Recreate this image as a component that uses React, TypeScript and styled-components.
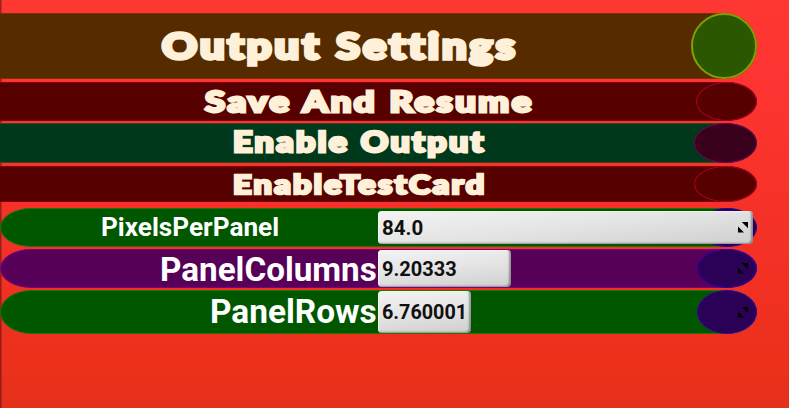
import React, { useLayoutEffect, useRef, useState } from "react";
import styled, { createGlobalStyle } from "styled-components";

const GlobalStyle = createGlobalStyle`
  * { box-sizing: border-box; }
  body { margin: 0; overflow: hidden; background: #f03020; }
`;

const Panel = styled.main`
  width: 789px;
  height: 408px;
  padding-top: 13px;
  display: flex;
  flex-direction: column;
  align-items: flex-start;
  overflow: hidden;
  background:
    linear-gradient(90deg, rgba(80, 15, 15, 0.65), rgba(80, 15, 15, 0.45) 1px, transparent 2.5px),
    linear-gradient(180deg, #ff3733 0%, #fd3431 22%, #f63228 50%, #f03021 75%, #ec301b 90%, #e4301b 100%);
`;

const Bar = styled.div<{ $h: number; $gap: number; $fill: string; $edge: string; $round?: boolean; $knob: number }>`
  flex: none;
  display: flex;
  align-items: center;
  width: 757px;
  height: ${p => p.$h}px;
  margin-bottom: ${p => p.$gap}px;
  background: ${p => p.$fill};
  border: 1px solid ${p => p.$edge};
  ${p => !p.$round && "border-left: 0;"}
  border-radius: ${p => {
    const rx = p.$knob / 2;
    const left = p.$round ? 31 : 0;
    return `${left}px ${rx}px ${rx}px ${left}px / 50%`;
  }};
`;

const Knob = styled.span<{ $w: number; $fill: string; $edge: string; $line?: number }>`
  flex: none;
  display: flex;
  align-items: center;
  justify-content: flex-end;
  width: ${p => p.$w}px;
  height: calc(100% + 2px);
  margin: -1px -1px -1px auto;
  padding-right: 8px;
  border-radius: 50%;
  border: ${p => p.$line ?? 1}px solid ${p => p.$edge};
  background: ${p => p.$fill};
`;

const TextSlot = styled.span<{ $x: number; $w: number; $dy: number }>`
  flex: none;
  width: ${p => p.$w}px;
  margin-left: ${p => p.$x}px;
  padding-top: ${p => Math.max(0, p.$dy) * 2}px;
  padding-bottom: ${p => Math.max(0, -p.$dy) * 2}px;
  line-height: 1;
`;

const Glyphs = styled.span<{ $size: number; $kind: Kind }>`
  display: inline-block;
  vertical-align: top;
  white-space: nowrap;
  transform-origin: left center;
  font-size: ${p => p.$size}px;
  line-height: 1;
  ${p => p.$kind === "display" && `
    font-family: Lato, sans-serif;
    font-weight: 900;
    color: #fff1d9;
    -webkit-text-stroke: ${p.$size * 0.1}px #fff1d9;
    letter-spacing: 0.07em;
    word-spacing: 0.03em;
    margin-left: 0.03em;
    margin-right: -0.05em;
  `}
  ${p => p.$kind === "label" && `
    font-family: Roboto, sans-serif;
    font-weight: 700;
    color: #fff;
  `}
  ${p => p.$kind === "value" && `
    font-family: Roboto, sans-serif;
    font-weight: 700;
    color: #101010;
  `}
`;

type Kind = "display" | "label" | "value";
interface TextProps { children: string; kind: Kind; size: number; x: number; w: number; dy?: number }

function FitText({ children, kind, size, x, w, dy = 0 }: TextProps) {
  const ref = useRef<HTMLSpanElement>(null);
  const [scale, setScale] = useState(1);
  useLayoutEffect(() => {
    if (ref.current) setScale(w / ref.current.offsetWidth);
  }, [children, w, size]);
  return (
    <TextSlot $x={x} $w={w} $dy={dy}>
      <Glyphs ref={ref} $size={size} $kind={kind} style={{ transform: `scaleX(${scale})` }}>
        {children}
      </Glyphs>
    </TextSlot>
  );
}

const Field = styled.div<{ $w: number; $h: number }>`
  position: relative;
  z-index: 1;
  flex: none;
  display: flex;
  align-items: center;
  width: ${p => p.$w}px;
  height: ${p => p.$h}px;
  border-radius: 4px;
  background: linear-gradient(174deg, #f3f3f3, #e4e4e4 50%, #cfcfcf);
  box-shadow: inset -2px -1px 2px rgba(0, 0, 0, 0.35), inset 1px 1px 1px rgba(255, 255, 255, 0.6);
`;

const FieldSlot = styled.div`
  flex: none;
  display: flex;
  align-items: center;
  width: 319px;
  height: 100%;
`;

const GripSvg = styled.svg<{ $inField?: boolean }>`
  flex: none;
  width: 10px;
  height: 11px;
  ${p => p.$inField && "margin: 0 5px 0 auto;"}
`;

function Grip({ inField }: { inField?: boolean }) {
  return (
    <GripSvg $inField={inField} viewBox="0 0 10 11" fill="#000">
      <path d="M3.8 0H10V6.2ZM0 4.5V10.5H6Z" />
    </GripSvg>
  );
}

const HEADERS = [
  { text: "Output Settings", h: 66, gap: 3, fill: "#562b00", edge: "#803000", knob: 66, kf: "#2b5700", ke: "#84a000", line: 2, size: 36, x: 161, w: 356, dy: -1 },
  { text: "Save And Resume", h: 39, gap: 2, fill: "#570000", edge: "#87000f", knob: 61, kf: "#570000", ke: "#a80028", size: 29, x: 204, w: 329, dy: -1 },
  { text: "Enable Output", h: 40, gap: 3, fill: "#00381b", edge: "#38481b", knob: 63, kf: "#38001b", ke: "#700058", size: 27.5, x: 232, w: 253, dy: -1.5 },
  { text: "EnableTestCard", h: 36, gap: 6, fill: "#570000", edge: "#87000f", knob: 63, kf: "#570000", ke: "#a80028", size: 26, x: 232, w: 253, dy: -0.5 },
];

const FIELDS = [
  { text: "PixelsPerPanel", value: "84.0", h: 39, gap: 2, fill: "#005700", edge: "#287000", size: 26, x: 101, w: 178, after: 99, fw: 375, fh: 33, vw: 41, dy: -0.5 },
  { text: "PanelColumns", value: "9.20333", h: 39, gap: 2, fill: "#570057", edge: "#80007c", size: 34, x: 160, w: 217, after: 1, fw: 133, fh: 37, vw: 75, dy: 0.5 },
  { text: "PanelRows", value: "6.760001", h: 44, gap: 0, fill: "#005700", edge: "#287000", size: 34, x: 210, w: 167, after: 1, fw: 93, fh: 42, vw: 85, dy: -1 },
];

export default function App() {
  return (
    <>
      <GlobalStyle />
      <Panel>
        {HEADERS.map(r => (
          <Bar key={r.text} $h={r.h} $gap={r.gap} $fill={r.fill} $edge={r.edge} $knob={r.knob}>
            <FitText kind="display" size={r.size} x={r.x} w={r.w} dy={r.dy}>{r.text}</FitText>
            <Knob $w={r.knob} $fill={r.kf} $edge={r.ke} $line={r.line} />
          </Bar>
        ))}
        {FIELDS.map((r, i) => (
          <Bar key={r.text} $h={r.h} $gap={r.gap} $fill={r.fill} $edge={r.edge} $knob={60} $round>
            <FitText kind="label" size={r.size} x={r.x - 1} w={r.w} dy={r.dy}>{r.text}</FitText>
            <FieldSlot style={{ marginLeft: r.after }}>
              <Field $w={r.fw} $h={r.fh}>
                <FitText kind="value" size={20} x={4} w={r.vw}>{r.value}</FitText>
                {i === 0 && <Grip inField />}
              </Field>
            </FieldSlot>
            <Knob $w={60} $fill="#2b0057" $edge="#3500a0">{i > 0 && <Grip />}</Knob>
          </Bar>
        ))}
      </Panel>
    </>
  );
}
